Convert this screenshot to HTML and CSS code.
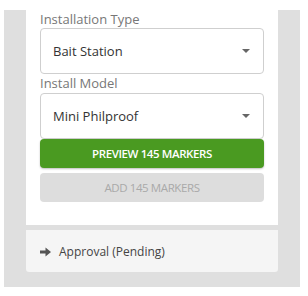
FILE: index.html
```html
<!DOCTYPE html>
<html lang="en">
<head>
    <meta charset="UTF-8">
    <title>Install Markers</title>
    <link rel="stylesheet" href="styles.css">
</head>
<body>
    <div class="stage">
        <!-- Install form -->
        <div class="panel">
            <label class="field-label">Installation Type</label>
            <div class="select">
                <span>Bait Station</span>
                <span class="caret"></span>
            </div>
            <label class="field-label next">Install Model</label>
            <div class="select">
                <span>Mini Philproof</span>
                <span class="caret"></span>
            </div>
            <button class="btn btn-preview">PREVIEW 145 MARKERS</button>
            <button class="btn btn-add" disabled>ADD 145 MARKERS</button>
        </div>

        <!-- Next step -->
        <div class="step">
            <svg class="step-icon" width="11" height="10" viewBox="0 0 11 10">
                <path d="M0 3.5h5.5V0.5L11 5l-5.5 4.5v-3H0z" fill="#555"/>
            </svg>
            <span>Approval (Pending)</span>
        </div>
        <div class="stage-foot"></div>
    </div>
</body>
</html>
```

FILE: styles.css
```css
* {
    margin: 0;
    padding: 0;
    box-sizing: border-box;
}

body {
    background-color: #ffffff;
    font-family: "Open Sans", Arial, sans-serif;
    padding: 10px 8px 9px 4px;
}

.stage {
    background-color: #dfdfdf;
    padding: 0 22px 0 22px;
}

/* Form panel */
.panel {
    background-color: #ffffff;
    padding: 0 14px 23px 14px;
    display: flex;
    flex-direction: column;
}

.field-label {
    font-size: 13px;
    line-height: 18px;
    color: #777;
}

.field-label.next {
    line-height: 19px;
}

.select {
    height: 46px;
    border: 1px solid #cfcfcf;
    border-radius: 4px;
    display: flex;
    align-items: center;
    justify-content: space-between;
    padding: 0 13px 0 12px;
    font-size: 13px;
    color: #333;
}

.caret {
    width: 0;
    height: 0;
    border-left: 4px solid transparent;
    border-right: 4px solid transparent;
    border-top: 4px solid #666;
}

.btn {
    height: 29px;
    border: none;
    border-radius: 4px;
    font-family: "Open Sans", Arial, sans-serif;
    font-size: 11.5px;
    font-weight: 600;
    letter-spacing: -0.4px;
}

.btn-preview {
    background-color: #4a9a21;
    color: #ffffff;
    box-shadow: 0 1px 2px rgba(0, 0, 0, 0.25);
}

.btn-add {
    margin-top: 5px;
    background-color: #dddddd;
    color: #a9a9a9;
    font-weight: 400;
}

/* Step row */
.step {
    margin-top: 5px;
    height: 42px;
    background-color: #f5f5f5;
    border-radius: 0 0 3px 3px;
    display: flex;
    align-items: center;
    gap: 8px;
    padding-left: 14px;
    font-size: 12px;
    color: #444;
}

.step-icon {
    margin-top: 1px;
}

.stage-foot {
    height: 15px;
}
```
